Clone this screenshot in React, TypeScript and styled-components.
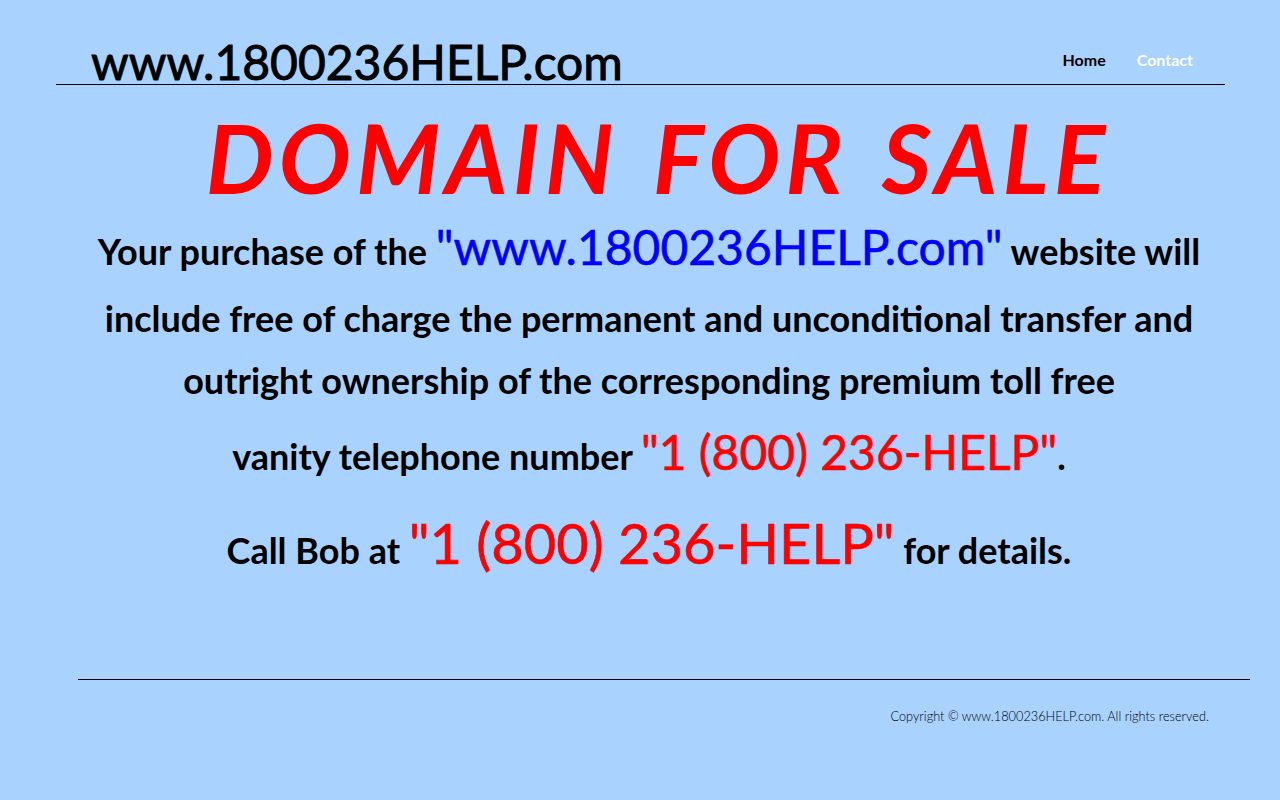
import React from "react";
import styled, { createGlobalStyle } from "styled-components";

const Global = createGlobalStyle`
  html, body { margin: 0; padding: 0; }
  body {
    background: #a9d2fe;
    font-family: Lato, "Open Sans", "Liberation Sans", sans-serif;
    width: 1280px;
    height: 800px;
    overflow: hidden;
  }
`;

const Page = styled.div`
  width: 1280px;
  height: 800px;
  display: flex;
  flex-direction: column;
`;

const Header = styled.header`
  margin: 0 55px 0 56px;
  height: 84px;
  border-bottom: 1px solid #000;
  display: flex;
  align-items: flex-end;
  justify-content: space-between;
`;

const SiteTitle = styled.h1`
  margin: 0 0 -2px 35px;
  font-size: 48px;
  font-weight: 400;
  color: #000;
  line-height: 1;
  -webkit-text-stroke: 0.9px #000;
`;

const Nav = styled.nav`
  align-self: flex-start;
  margin-top: 50px;
  margin-right: 32px;
  display: flex;
  gap: 31px;
`;

const NavLink = styled.a<{ $active?: boolean }>`
  font-size: 16px;
  font-weight: 700;
  color: ${(p) => (p.$active ? "#ffffff" : "#000000")};
  text-decoration: none;
`;

const Main = styled.main`
  padding-left: 18px;
  text-align: center;
`;

const Headline = styled.h2`
  margin: 19px 0 3px 18px;
  font-size: 96px;
  font-style: italic;
  font-weight: 700;
  color: #ff0000;
  letter-spacing: 5px;
  word-spacing: 8px;
  line-height: 1.1;
`;

const Para = styled.p<{ $lh: number }>`
  margin: 0;
  font-size: 36px;
  font-weight: 700;
  color: #000;
  line-height: ${(p) => p.$lh}px;
`;

const Blue = styled.span`
  color: #0000ff;
  font-weight: 400;
  font-size: 48px;
  -webkit-text-stroke: 0.6px #0000ff;
`;

const Red = styled.span<{ $size: number }>`
  color: #ff0000;
  font-weight: 400;
  font-size: ${(p) => p.$size}px;
  -webkit-text-stroke: 0.6px #ff0000;
`;

const Footer = styled.footer`
  margin-top: auto;
  margin-bottom: 76px;
  margin-left: 78px;
  margin-right: 30px;
  border-top: 1px solid #000;
  padding-top: 28px;
  padding-right: 41px;
  text-align: right;
  font-size: 12.75px;
  font-weight: 300;
  color: #000;
`;

export default function App() {
  return (
    <>
      <Global />
      <Page>
        <Header>
          <SiteTitle>www.1800236HELP.com</SiteTitle>
          <Nav>
            <NavLink href="#">Home</NavLink>
            <NavLink href="#" $active>Contact</NavLink>
          </Nav>
        </Header>
        <Main>
          <Headline>DOMAIN FOR SALE</Headline>
          <Para $lh={68}>
            Your purchase of the <Blue>"www.1800236HELP.com"</Blue> website will
          </Para>
          <Para $lh={66}>include free of charge the permanent and unconditional transfer and</Para>
          <Para $lh={58}>outright ownership of the corresponding premium toll free</Para>
          <Para $lh={86}>
            vanity telephone number <Red $size={48}>"1 (800) 236-HELP"</Red>.
          </Para>
          <Para $lh={88}>
            Call Bob at <Red $size={56}>"1 (800) 236-HELP"</Red> for details.
          </Para>
        </Main>
        <Footer>Copyright © www.1800236HELP.com. All rights reserved.</Footer>
      </Page>
    </>
  );
}
